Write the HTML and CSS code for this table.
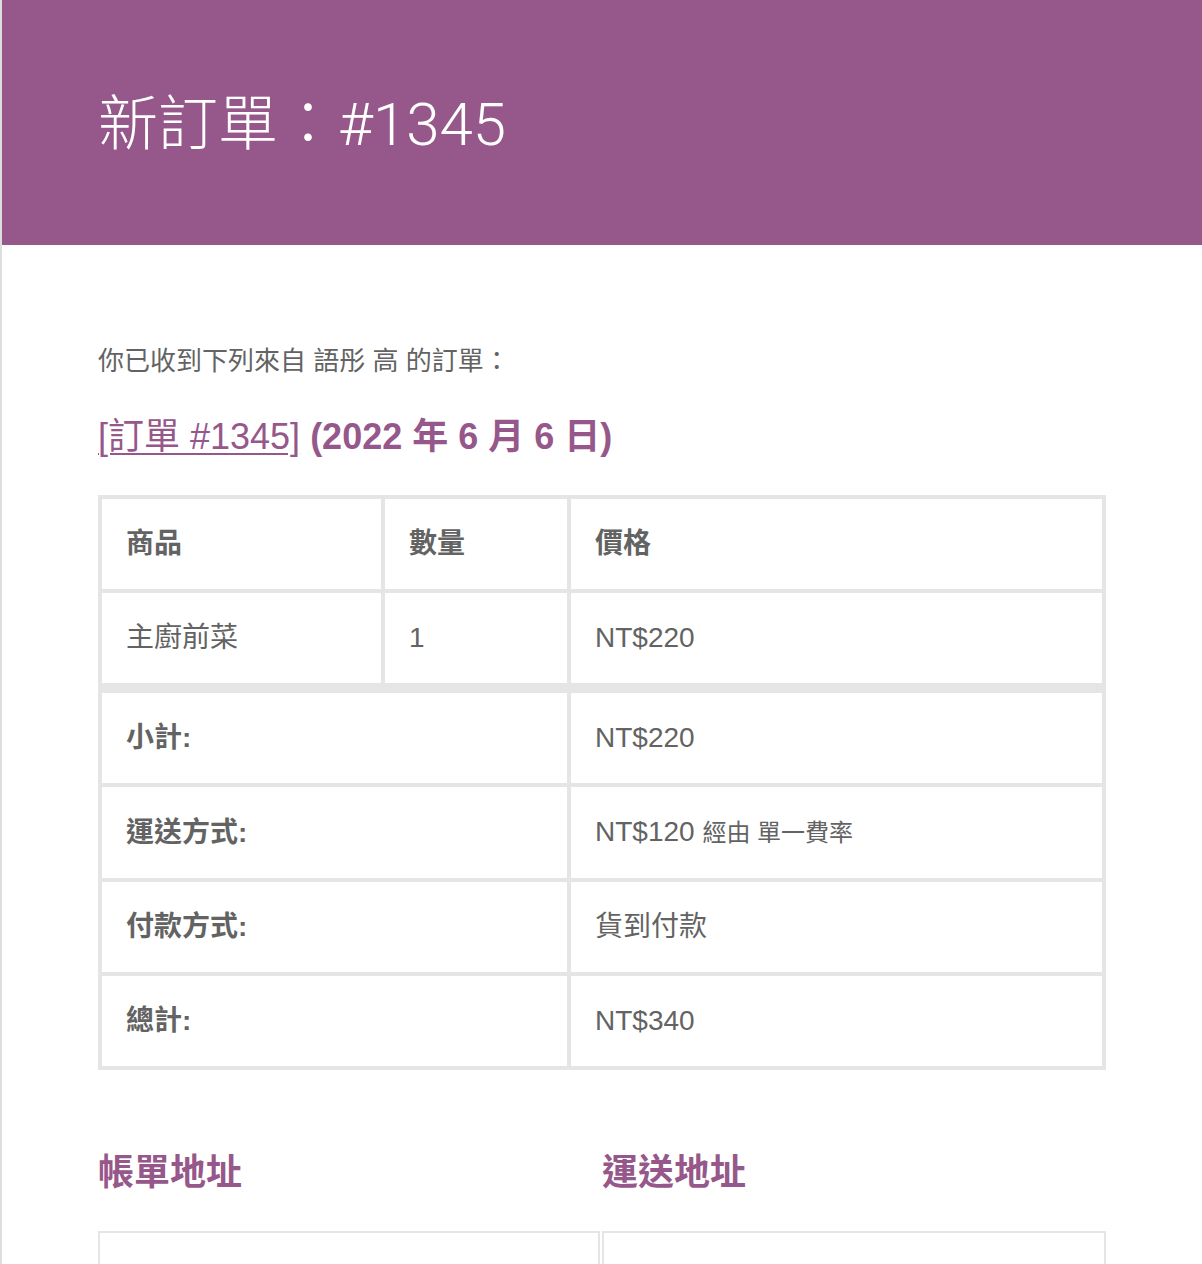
FILE: index.html
```html
<!DOCTYPE html>
<html lang="zh-Hant">
<head>
<meta charset="utf-8">
<title>新訂單：#1345</title>
<link rel="stylesheet" href="styles.css">
</head>
<body>
<div class="container">
  <header class="header">
    <h1 class="title">新訂單：#1345</h1>
  </header>
  <main class="content">
    <p class="intro">你已收到下列來自 語彤 高 的訂單：</p>
    <h2 class="heading"><a class="order-link" href="#">[訂單 #1345]</a> (2022 年 6 月 6 日)</h2>
    <table class="order">
      <thead>
        <tr>
          <th class="col-product">商品</th>
          <th class="col-qty">數量</th>
          <th class="col-price">價格</th>
        </tr>
      </thead>
      <tbody>
        <tr>
          <td>主廚前菜</td>
          <td>1</td>
          <td>NT$220</td>
        </tr>
      </tbody>
      <tfoot>
        <tr class="first">
          <th colspan="2">小計:</th>
          <td>NT$220</td>
        </tr>
        <tr>
          <th colspan="2">運送方式:</th>
          <td>NT$120&nbsp;<small class="via">經由 單一費率</small></td>
        </tr>
        <tr>
          <th colspan="2">付款方式:</th>
          <td>貨到付款</td>
        </tr>
        <tr>
          <th colspan="2">總計:</th>
          <td>NT$340</td>
        </tr>
      </tfoot>
    </table>
    <div class="addresses">
      <div class="addr-col">
        <h2 class="heading">帳單地址</h2>
        <div class="addr-box"></div>
      </div>
      <div class="addr-col">
        <h2 class="heading">運送地址</h2>
        <div class="addr-box"></div>
      </div>
    </div>
  </main>
</div>
</body>
</html>
```

FILE: styles.css
```css
html, body {
  margin: 0;
  padding: 0;
  background: #ffffff;
  overflow: hidden;
}

body {
  font-family: "Liberation Sans", "Noto Sans CJK TC", sans-serif;
  color: #636363;
}

.container {
  width: 1200px;
  border-left: 2px solid #dedede;
  min-height: 1264px;
  background: #ffffff;
}

.header {
  background: #96588a;
  padding: 80px 96px 75px;
}

.title {
  margin: 0;
  font-family: "Roboto", "Noto Sans CJK TC", sans-serif;
  font-size: 60px;
  line-height: 90px;
  font-weight: 300;
  color: #ffffff;
}

.content {
  padding: 97px 96px 0;
}

.intro {
  margin: 0 0 32px;
  font-size: 26px;
  line-height: 39px;
}

.heading {
  margin: 0 0 35px;
  font-size: 36px;
  line-height: 47px;
  font-weight: bold;
  color: #96588a;
}

.order-link {
  color: #96588a;
  font-weight: normal;
  text-decoration: underline;
  text-decoration-thickness: 2px;
  text-underline-offset: 4px;
}

.order {
  width: 100%;
  border: 2px solid #e5e5e5;
  border-spacing: 0;
  margin: 0 0 79px;
  font-size: 28px;
  line-height: 42px;
  color: #636363;
}

.order th,
.order td {
  border: 2px solid #e5e5e5;
  padding: 24px;
  text-align: left;
  vertical-align: middle;
  box-sizing: border-box;
}

.order th {
  font-weight: bold;
}

.order td {
  font-weight: normal;
}

.col-product {
  width: 283px;
}

.col-qty {
  width: 186px;
}

.order tfoot tr.first th,
.order tfoot tr.first td {
  border-top-width: 8px;
}

.via {
  font-size: 24px;
}

.addresses {
  display: grid;
  grid-template-columns: 1fr 1fr;
}

.addr-box {
  border: 2px solid #e5e5e5;
  height: 200px;
  box-sizing: border-box;
}

.addr-col:first-child .addr-box {
  margin-right: 2px;
}
```
